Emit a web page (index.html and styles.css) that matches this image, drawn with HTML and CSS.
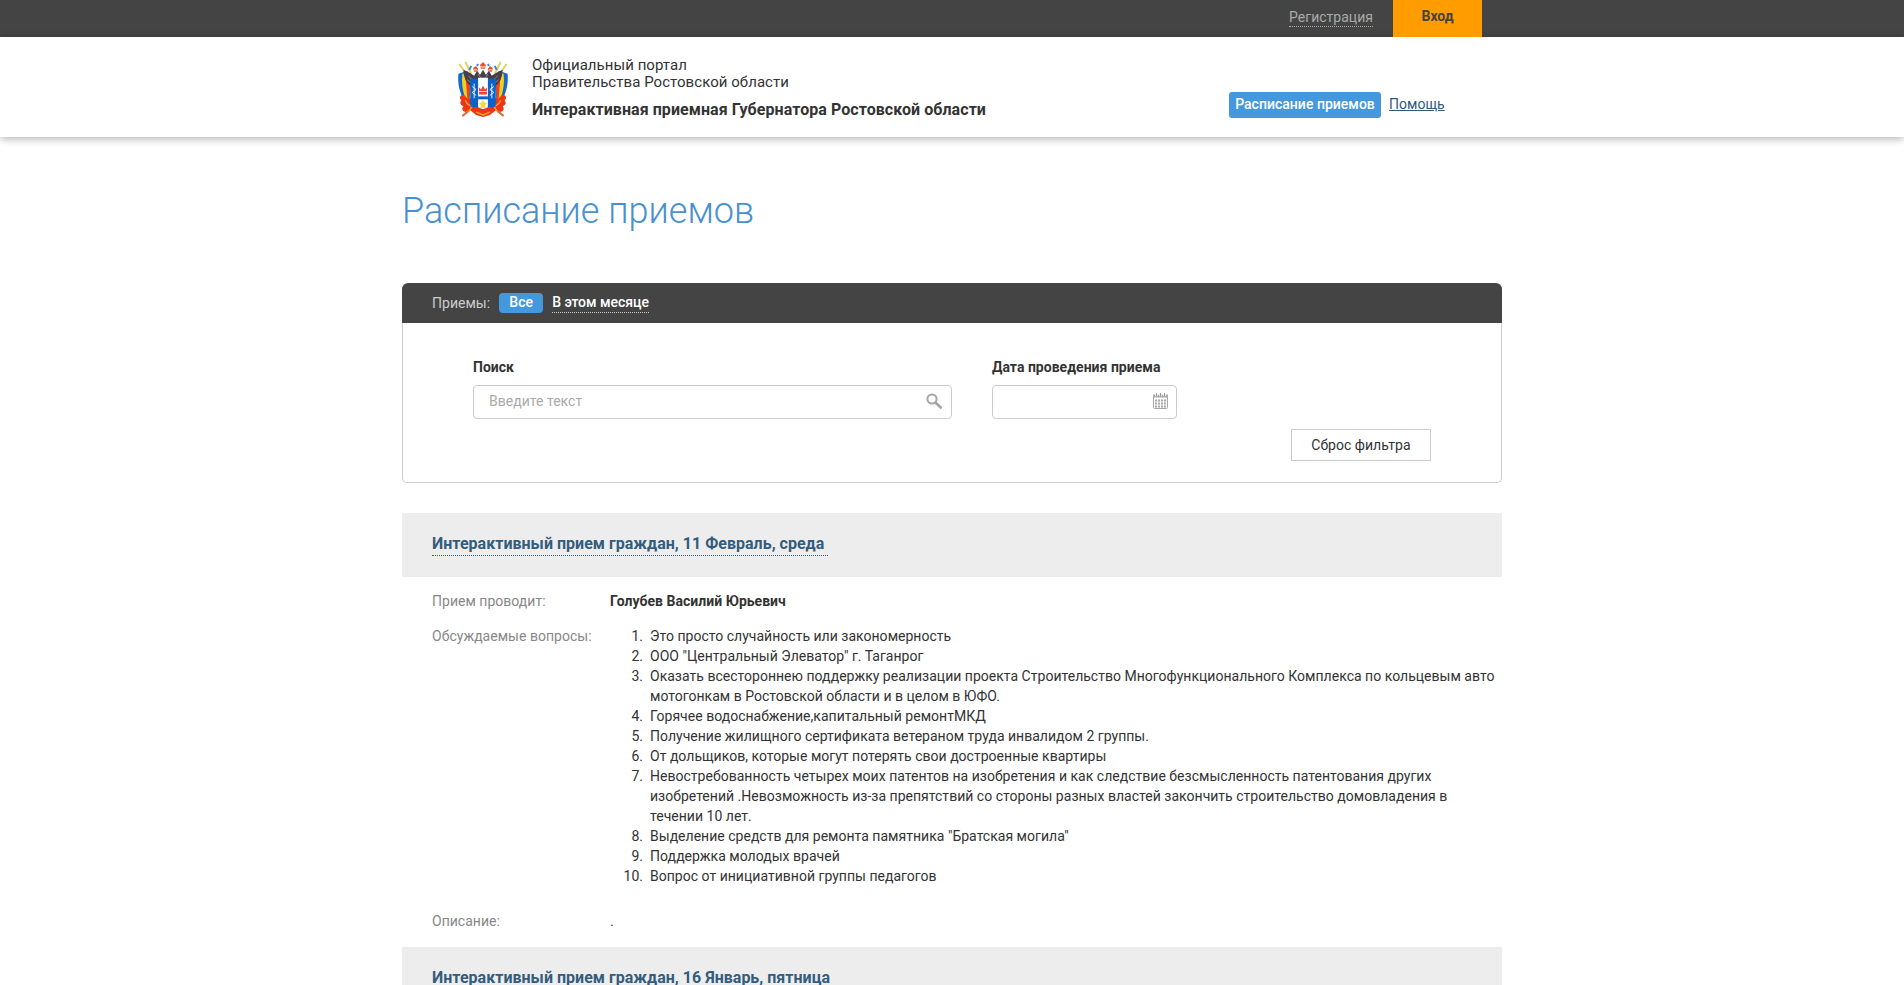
FILE: index.html
```html
<!DOCTYPE html>
<html lang="ru">
<head>
<meta charset="utf-8">
<title>Расписание приемов</title>
<link rel="stylesheet" href="styles.css">
</head>
<body>
<div class="topbar">
  <a class="register">Регистрация</a>
  <a class="login">Вход</a>
</div>
<header class="header">
  <div class="header-inner">
    <svg class="emblem" viewBox="0 0 54 58" width="54" height="57">
      <path d="M3 3l9 13M9 1l6 12M51 3l-9 13M45 1l-6 12" stroke="#e3d35a" stroke-width="2" fill="none"/>
      <path d="M2 13l9-3 4 12-2 21-6-4C3 31 1 23 2 13zM52 13l-9-3-4 12 2 21 6-4c4-8 6-16 5-26z" fill="#1769c9"/>
      <path d="M6 13l4-1 3 12-1 17-3-3C6 29 5 22 6 13zM48 13l-4-1-3 12 1 17 3-3c3-9 4-16 3-25z" fill="#f4ce20"/>
      <path d="M9 14l3 1 2 9-1 16-2-3zM45 14l-3 1-2 9 1 16 2-3z" fill="#e9431f"/>
      <path d="M7 34q-6 2-2 6-3 4 2 6-3 4 2 6l5-2 6 5 7 2 7-2 6-5 5 2q5-2 2-6 5-2 2-6 4-4-2-6l-4 4H11z" fill="#ee3514"/>
      <path d="M9 40q2 5 7 6l-4 6M45 40q-2 5-7 6l4 6M20 52l7 3 7-3" stroke="#f7a12a" stroke-width="1.500" fill="none"/>
      <path d="M7 9q7 3 11 6l3-5 3 4 3-5 3 5 3-4 3 5q4-3 11-6 0 12-9 18H16Q7 21 7 9z" fill="#463f4a"/>
      <path d="M12 15l6 6M11 19l6 5M42 15l-6 6M43 19l-6 5M22 13l3 5M32 13l-3 5" stroke="#8d8791" fill="none"/>
      <path d="M24 4l3-3 3 3-1 4h-4zM17 7l3-2 2 3-1 3h-3zM37 7l-3-2-2 3 1 3h3z" fill="#ee4e35"/>
      <path d="M24 6h6M18 9h3M33 9h3" stroke="#fff5b0" fill="none"/>
      <path d="M15 5l-2 4M39 5l2 4M22 3l-1 2M32 3l1 2" stroke="#3584d6" stroke-width="2" fill="none"/>
      <path d="M14 18h26v26q0 3-3 3h-7l-3 3-3-3h-7q-3 0-3-3z" fill="#0d62ca"/>
      <path d="M22 17h10v30l-5 2-5-2z" fill="#fbfdff"/>
      <path d="M22 36h10v3H22z" fill="#0d62ca"/>
      <path d="M23 34v-7l2 2 2-4 2 4 2-2v7z" fill="#ef4132"/>
      <path d="M23 31h8" stroke="#ffd2c7" fill="none"/>
      <path d="M27 39l1 3 3 1-2 2 1 3-3-1-3 1 1-3-2-2 3-1z" fill="#f7d83c"/>
      <path d="M18 23v15M36 23v15M16 26l4 3-4 3 4 3M38 26l-4 3 4 3-4 3" stroke="#e4f1ff" fill="none"/>
      <path d="M6 56l6-5M48 56l-6-5" stroke="#d86a35" stroke-width="2"/>
    </svg>
    <div class="brand">
      <div class="portal">Официальный портал<br>Правительства Ростовской области</div>
      <div class="site-name">Интерактивная приемная Губернатора Ростовской области</div>
    </div>
    <nav class="nav">
      <a class="nav-active">Расписание приемов</a>
      <a class="nav-link">Помощь</a>
    </nav>
  </div>
</header>
<main class="page">
  <h1 class="title">Расписание приемов</h1>
  <section class="filter">
    <div class="filter-head">
      <span class="filter-label">Приемы:</span>
      <a class="pill">Все</a>
      <a class="month">В этом месяце</a>
    </div>
    <div class="filter-body">
      <div class="fields">
        <div class="field field-search">
          <label class="caption">Поиск</label>
          <div class="input"><span class="placeholder">Введите текст</span>
            <svg class="icon-search" width="17" height="17" viewBox="0 0 17 17"><circle cx="6" cy="6" r="4.600" fill="none" stroke="#a5a5a5" stroke-width="2"/><path d="M9.500 9.500l5.200 5" stroke="#a5a5a5" stroke-width="2.600" stroke-linecap="round"/></svg>
          </div>
        </div>
        <div class="field field-date">
          <label class="caption">Дата проведения приема</label>
          <div class="input">
            <svg class="icon-calendar" width="16" height="17" viewBox="0 0 16 17"><rect x=".5" y="2.500" width="14" height="13" rx="1" fill="#fff" stroke="#a6a6a6"/><path d="M0 1.500h15v3H0z" fill="#aaa"/><path d="M3.500 0v3M7.500 0v3M11.500 0v3" stroke="#fff" stroke-width="2.400"/><path d="M3.500 0v3M7.500 0v3M11.500 0v3" stroke="#999"/><path d="M2 7.500h11M2 10.500h11M2 13.500h11" stroke="#a6a6a6" stroke-width="2" stroke-dasharray="2 1"/></svg>
          </div>
        </div>
      </div>
      <a class="reset">Сброс фильтра</a>
    </div>
  </section>
  <article>
    <div class="item-head"><a class="item-title">Интерактивный прием граждан, 11 Февраль, среда&nbsp;</a></div>
    <dl class="details">
      <dt>Прием проводит:</dt><dd class="person">Голубев Василий Юрьевич</dd>
      <dt>Обсуждаемые вопросы:</dt>
      <dd>
        <ol class="questions">
          <li>Это просто случайность или закономерность</li>
          <li>ООО "Центральный Элеватор" г. Таганрог</li>
          <li>Оказать всестороннею поддержку реализации проекта Строительство Многофункционального Комплекса по кольцевым авто<br>мотогонкам в Ростовской области и в целом в ЮФО.</li>
          <li>Горячее водоснабжение,капитальный ремонтМКД</li>
          <li>Получение жилищного сертификата ветераном труда инвалидом 2 группы.</li>
          <li>От дольщиков, которые могут потерять свои достроенные квартиры</li>
          <li>Невостребованность четырех моих патентов на изобретения и как следствие безсмысленность патентования других<br>изобретений .Невозможность из-за препятствий со стороны разных властей закончить строительство домовладения в<br>течении 10 лет.</li>
          <li>Выделение средств для ремонта памятника "Братская могила"</li>
          <li>Поддержка молодых врачей</li>
          <li>Вопрос от инициативной группы педагогов</li>
        </ol>
      </dd>
      <dt>Описание:</dt><dd>.</dd>
    </dl>
  </article>
  <article>
    <div class="item-head"><a class="item-title">Интерактивный прием граждан, 16 Январь, пятница&nbsp;</a></div>
  </article>
</main>
</body>
</html>
```
FILE: styles.css
```css
* { box-sizing: border-box; }
body {
  margin: 0;
  height: 985px;
  overflow: hidden;
  background: #fff;
  color: #333;
  font: 14px/20px Roboto, sans-serif;
  letter-spacing: 0.02px;
}
.topbar {
  display: flex;
  justify-content: flex-end;
  height: 37px;
  padding-right: 422px;
  background: #444;
}
.register {
  align-self: flex-start;
  height: 20px;
  margin: 7px 20px 0 0;
  border-bottom: 1px dotted #aaa;
  color: #aaa;
}
.login {
  width: 89px;
  background: #ff9c00;
  color: #444;
  font-weight: 700;
  line-height: 33px;
  text-align: center;
}
.header {
  height: 100px;
  background: #fff;
  box-shadow: 0 2px 8px rgba(0, 0, 0, 0.3);
}
.header-inner {
  display: flex;
  width: 992px;
  margin: 0 auto;
  padding-top: 20px;
}
.emblem { margin: 4px 22px 0 0; }
.portal { font-size: 15px; line-height: 17px; letter-spacing: 0.05px; }
.site-name { margin-top: 9px; font-size: 16px; font-weight: 700; letter-spacing: 0.06px; }
.nav {
  display: flex;
  gap: 8px;
  width: 219px;
  margin: 35px 0 0 auto;
  line-height: 25px;
}
.nav-active {
  width: 152px;
  height: 26px;
  border-radius: 3px;
  background: #4499de;
  color: #fff;
  font-weight: 500;
  text-align: center;
}
.nav-link { color: #31587b; text-decoration: underline; }
.page { width: 1100px; margin: 0 auto; }
.title {
  margin: 53px 0 0;
  color: #4990d0;
  font-size: 36px;
  font-weight: 300;
  line-height: 42px;
}
.filter { margin-top: 51px; }
.filter-head {
  display: flex;
  align-items: flex-start;
  height: 40px;
  padding: 10px 30px 0;
  border-radius: 6px 6px 0 0;
  background: #444;
}
.filter-label { margin-right: 9px; color: #ccc; }
.pill {
  width: 44px;
  height: 20px;
  margin-right: 9px;
  border-radius: 4px;
  background: #4499de;
  color: #fff;
  line-height: 19px;
  text-align: center;
}
.month {
  height: 20px;
  border-bottom: 1px dotted #ccc;
  color: #fff;
  line-height: 19px;
}
.pill, .month { font-weight: 500; letter-spacing: 0; }
.filter-body {
  display: flex;
  flex-direction: column;
  height: 160px;
  padding: 34px 70px 0;
  border: 1px solid #ccc;
  border-top: 0;
  border-radius: 0 0 5px 5px;
}
.fields { display: flex; gap: 40px; }
.field-search { width: 479px; }
.field-date { width: 185px; }
.caption { display: block; font-weight: 700; margin-bottom: 8px; }
.input {
  display: flex;
  justify-content: flex-end;
  height: 34px;
  border: 1px solid #ccc;
  border-radius: 4px;
}
.placeholder { flex: 1; padding: 5px 0 0 15px; color: #aaa; }
.icon-search { margin: 7px 8px 0 0; }
.icon-calendar { margin: 7px 7px 0 0; }
.reset {
  align-self: flex-end;
  width: 140px;
  height: 32px;
  margin-top: 10px;
  border: 1px solid #ccc;
  line-height: 30px;
  text-align: center;
}
.item-head {
  height: 64px;
  padding: 20px 30px 0;
  background: #ededed;
}
.filter + article { margin-top: 30px; }
.item-title {
  display: inline-block;
  height: 23px;
  border-bottom: 1px dotted #345c7d;
  color: #345c7d;
  font-size: 16px;
  font-weight: 700;
  line-height: 22px;
}
.details {
  display: grid;
  grid-template-columns: 178px 1fr;
  height: 370px;
  margin: 0;
  padding: 14px 0 0 30px;
  grid-template-rows: 35px 285px 20px;
}
dt { color: #888; }
dd { margin: 0; }
.person { font-weight: 700; }
.questions { margin: 0; padding-left: 40px; }
.questions li::marker { content: counter(list-item) ".\00a0\00a0"; }
```
